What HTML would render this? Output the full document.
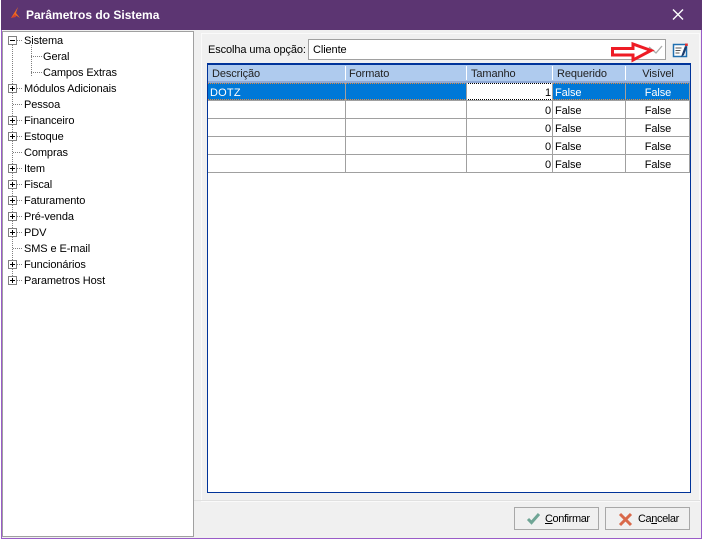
<!DOCTYPE html>
<html><head><meta charset="utf-8"><style>
html,body{margin:0;padding:0;background:#fff}
#w{position:relative;width:704px;height:540px;overflow:hidden;background:#fff;font:11px "Liberation Sans",sans-serif;color:#000}
#w div,#w span.a{position:absolute;box-sizing:border-box}
.t{white-space:nowrap;line-height:14px;letter-spacing:-.1px}
.c{white-space:nowrap;line-height:18px;height:18px;letter-spacing:-.1px}
svg{position:absolute;left:0;top:0}
</style></head><body><div id="w">
<div style="left:1px;top:0;width:701px;height:539px;background:#f0f0f0;border:1px solid #9a5cc8;border-top:0"></div>
<div style="left:1px;top:0;width:701px;height:30px;background:#5c3572"></div>
<div class="t" style="left:26px;top:8px;color:#fff;font-weight:bold;font-size:12px;letter-spacing:0">Parâmetros do Sistema</div>
<div style="left:2px;top:31px;width:192px;height:506px;background:#fff;border:1px solid #a0a0a0"></div>
<div style="left:201px;top:33px;width:499px;height:469px;border:1px solid #fafafa"></div>
<div style="left:194px;top:500px;width:506px;height:1px;background:#e0e0e0"></div>
<div class="t" style="left:208px;top:43px">Escolha uma opção:</div>
<div style="left:308px;top:39px;width:358px;height:21px;background:#fff;border:1px solid #a0a0a0"></div>
<div class="t" style="left:313px;top:43px">Cliente</div>
<div style="left:207px;top:63px;width:484px;height:430px;background:#fff;border:2px solid #003399;border-width:2px 1px 1px 1px"></div>
<div style="left:208px;top:65px;width:482px;height:17px;background:#afcbee"></div>
<div style="left:208px;top:81px;width:482px;height:2px;background:#8fa9d6"></div>
<div style="left:208px;top:83px;width:481px;height:17px;background:#0078d7"></div>
<div style="left:466px;top:83px;width:87px;height:17px;background:#fff;border:1px dotted #000"></div>
<svg width="704" height="540" shape-rendering="crispEdges">
<g fill="#a0a0a0">
<rect x="208" y="100" width="481" height="1"/><rect x="208" y="118" width="481" height="1"/><rect x="208" y="136" width="481" height="1"/><rect x="208" y="154" width="481" height="1"/><rect x="208" y="172" width="481" height="1"/>
<rect x="345" y="83" width="1" height="90"/><rect x="466" y="83" width="1" height="90"/><rect x="552" y="83" width="1" height="90"/><rect x="625" y="83" width="1" height="90"/><rect x="689" y="83" width="1" height="90"/>
</g>
<g fill="#fff"><rect x="345" y="66" width="1" height="14"/><rect x="466" y="66" width="1" height="14"/><rect x="552" y="66" width="1" height="14"/><rect x="625" y="66" width="1" height="14"/></g>
<path d="M208 83.500H466M553 83.500H689M208 99.500H466M553 99.500H689" stroke="#e08a40" stroke-dasharray="1 1" fill="none"/>
<g fill="none" stroke="#808080" stroke-dasharray="1 1">
<path d="M12.500 45V285M31.500 45V77M31 56.500H42M31 72.500H42M17 40.500H23M17 88.500H23M13 104.500H23M17 120.500H23M17 136.500H23M13 152.500H23M17 168.500H23M17 184.500H23M17 200.500H23M17 216.500H23M17 232.500H23M13 248.500H23M17 264.500H23M17 280.500H23"/>
</g>
<g id="boxes" fill="#fff" stroke="#808080">
<rect x="8.500" y="36.500" width="8" height="8"/><rect x="8.500" y="84.500" width="8" height="8"/><rect x="8.500" y="116.500" width="8" height="8"/><rect x="8.500" y="132.500" width="8" height="8"/><rect x="8.500" y="164.500" width="8" height="8"/><rect x="8.500" y="180.500" width="8" height="8"/><rect x="8.500" y="196.500" width="8" height="8"/><rect x="8.500" y="212.500" width="8" height="8"/><rect x="8.500" y="228.500" width="8" height="8"/><rect x="8.500" y="260.500" width="8" height="8"/><rect x="8.500" y="276.500" width="8" height="8"/>
</g>
<path d="M10 40.500h5M10 88.500h5M12.500 86v5M10 120.500h5M12.500 118v5M10 136.500h5M12.500 134v5M10 168.500h5M12.500 166v5M10 184.500h5M12.500 182v5M10 200.500h5M12.500 198v5M10 216.500h5M12.500 214v5M10 232.500h5M12.500 230v5M10 264.500h5M12.500 262v5M10 280.500h5M12.500 278v5" stroke="#000" fill="none"/>
</svg>
<svg width="704" height="540">
<path d="M673 9.500l10 10M683 9.500l-10 10" stroke="#fff" stroke-width="1.400" fill="none"/>
<path d="M11 18l3.500-5.500L18 7l-2 6 4 5-4-2.500z" fill="#ef6c1f"/><path d="M11 18l4-4 1 3z" fill="#d8402a"/>
<path d="M649 47l7 6 6-7" stroke="#a8a8a8" fill="none" stroke-width="1.300"/>
<path d="M612.500 48.500H633V44L651 50.500 633 60V55H612.500Z" fill="none" stroke="#ee1c25" stroke-width="3"/>
<rect x="673.500" y="44.500" width="13" height="12" fill="#fff" stroke="#1f6fb0" stroke-width="1.500"/>
<path d="M675.500 48h6M675.500 50.500h5M675.500 53h4" stroke="#555" stroke-width="1" fill="none"/>
<path d="M681 57l1-3 3-8 2 1-3 8z" fill="#1c3d6e"/><rect x="685" y="43.500" width="2.800" height="2.500" fill="#d33"/>
<path d="M528 519l3.500 3.500 7.500-8.500" stroke="#6fa595" stroke-width="3" fill="none"/>
<path d="M620 514l11 11M631 514l-11 11" stroke="#d9694a" stroke-width="3" fill="none"/>
</svg>
<div class="t" style="left:24px;top:34px">Sistema</div>
<div class="t" style="left:43px;top:50px">Geral</div>
<div class="t" style="left:43px;top:66px">Campos Extras</div>
<div class="t" style="left:24px;top:82px">Módulos Adicionais</div>
<div class="t" style="left:24px;top:98px">Pessoa</div>
<div class="t" style="left:24px;top:114px">Financeiro</div>
<div class="t" style="left:24px;top:130px">Estoque</div>
<div class="t" style="left:24px;top:146px">Compras</div>
<div class="t" style="left:24px;top:162px">Item</div>
<div class="t" style="left:24px;top:178px">Fiscal</div>
<div class="t" style="left:24px;top:194px">Faturamento</div>
<div class="t" style="left:24px;top:210px">Pré-venda</div>
<div class="t" style="left:24px;top:226px">PDV</div>
<div class="t" style="left:24px;top:242px">SMS e E-mail</div>
<div class="t" style="left:24px;top:258px">Funcionários</div>
<div class="t" style="left:24px;top:274px">Parametros Host</div>
<div class="c" style="left:212px;top:65px;color:#222">Descrição</div>
<div class="c" style="left:349px;top:65px;color:#222">Formato</div>
<div class="c" style="left:471px;top:65px;color:#222">Tamanho</div>
<div class="c" style="left:557px;top:65px;color:#222">Requerido</div>
<div class="c" style="left:626px;top:65px;width:64px;text-align:center;color:#222">Visível</div>
<div class="c" style="left:210px;top:84px;color:#fff;letter-spacing:.2px">DOTZ</div>
<div class="c" style="left:467px;top:84px;width:84px;text-align:right">1</div>
<div class="c" style="left:467px;top:102px;width:84px;text-align:right">0</div>
<div class="c" style="left:467px;top:120px;width:84px;text-align:right">0</div>
<div class="c" style="left:467px;top:138px;width:84px;text-align:right">0</div>
<div class="c" style="left:467px;top:156px;width:84px;text-align:right">0</div>
<div class="c" style="left:555px;top:84px;color:#fff">False</div>
<div class="c" style="left:555px;top:102px">False</div>
<div class="c" style="left:555px;top:120px">False</div>
<div class="c" style="left:555px;top:138px">False</div>
<div class="c" style="left:555px;top:156px">False</div>
<div class="c" style="left:626px;top:84px;width:64px;text-align:center;color:#fff">False</div>
<div class="c" style="left:626px;top:102px;width:64px;text-align:center">False</div>
<div class="c" style="left:626px;top:120px;width:64px;text-align:center">False</div>
<div class="c" style="left:626px;top:138px;width:64px;text-align:center">False</div>
<div class="c" style="left:626px;top:156px;width:64px;text-align:center">False</div>
<div style="left:514px;top:507px;width:85px;height:23px;border:1px solid #a8a8a8;background:transparent"></div>
<div style="left:605px;top:507px;width:85px;height:23px;border:1px solid #a8a8a8;background:transparent"></div>
<div class="t" style="left:545px;top:512px;letter-spacing:-.4px"><u>C</u>onfirmar</div>
<div class="t" style="left:638px;top:512px;letter-spacing:-.4px">Ca<u>n</u>celar</div>
</div></body></html>
